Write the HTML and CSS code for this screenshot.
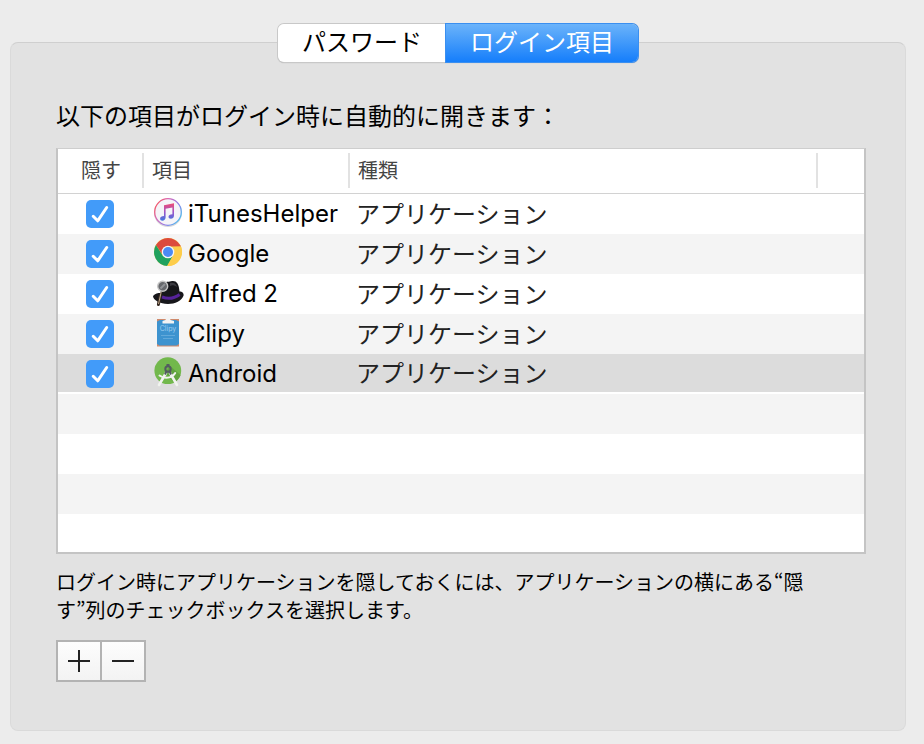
FILE: index.html
```html
<!DOCTYPE html>
<html lang="ja">
<head>
    <meta charset="UTF-8">
    <meta name="viewport" content="width=device-width, initial-scale=1.0">
    <title>ログイン項目</title>
    <link rel="stylesheet" href="styles.css">
</head>
<body>
    <div class="tabs" role="tablist">
        <button class="tab" type="button" role="tab" aria-selected="false">パスワード</button>
        <button class="tab active" type="button" role="tab" aria-selected="true">ログイン項目</button>
    </div>

    <main class="panel">
        <h1 class="title" id="title">以下の項目がログイン時に自動的に開きます：</h1>

        <div class="list">
            <table class="items" aria-labelledby="title">
                <colgroup>
                    <col class="col-hide">
                    <col class="col-name">
                    <col>
                    <col class="col-end">
                </colgroup>
                <thead>
                    <tr>
                        <th class="center"><span>隠す</span></th>
                        <th><span>項目</span></th>
                        <th><span>種類</span></th>
                        <th></th>
                    </tr>
                </thead>
                <tbody>
                    <tr>
                        <td class="center"><input type="checkbox" id="itunes" checked></td>
                        <td>
                            <label class="name" for="itunes">
                                <svg class="icon" viewBox="0 0 32 32">
                                    <defs>
                                        <linearGradient id="ring" x1="0" y1="0.2" x2="1" y2="0.8">
                                            <stop offset="0" stop-color="#f8565c"/>
                                            <stop offset="0.3" stop-color="#d668b8"/>
                                            <stop offset="0.65" stop-color="#8f7be8"/>
                                            <stop offset="1" stop-color="#42c6f0"/>
                                        </linearGradient>
                                        <linearGradient id="note" x1="0" y1="0" x2="0" y2="1">
                                            <stop offset="0" stop-color="#ef4d73"/>
                                            <stop offset="0.5" stop-color="#a052c8"/>
                                            <stop offset="1" stop-color="#3f78e0"/>
                                        </linearGradient>
                                    </defs>
                                    <circle cx="16" cy="15" r="14" fill="#000" opacity="0.15"/>
                                    <circle cx="16" cy="14" r="13.3" fill="#f5f4f8" stroke="url(#ring)" stroke-width="1.3"/>
                                    <path fill="url(#note)" d="M12 7.2 22 5.2V17.6C22 19.8 20.4 20.8 18.9 20.8 17.3 20.8 16.5 19.9 16.5 18.8 16.5 17.2 18 16.5 20.4 16.2V9.4L13.6 10.8V19.6C13.6 21.7 12 22.7 10.5 22.7 9 22.7 8.1 21.8 8.1 20.7 8.1 19.1 9.6 18.4 12 18.1Z"/>
                                </svg>
                                iTunesHelper
                            </label>
                        </td>
                        <td class="kind">アプリケーション</td>
                        <td></td>
                    </tr>
                    <tr>
                        <td class="center"><input type="checkbox" id="google" checked></td>
                        <td>
                            <label class="name" for="google">
                                <svg class="icon" viewBox="0 0 32 32">
                                    <circle cx="16" cy="14" r="14" fill="#fdcd4b"/>
                                    <path fill="#dc4a3d" d="M3.9 7A14 14 0 0 1 28.1 7L29 8.5H16L10.8 17Z"/>
                                    <path fill="#1fa15e" d="M3.9 7A14 14 0 0 0 15.5 28L21.2 17.2 16 20 10.5 17.3Z"/>
                                    <path fill="#fdcd4b" d="M28.9 8.5A14 14 0 0 1 15 28L21.2 17.2 20 9Z"/>
                                    <circle cx="16" cy="14" r="6.3" fill="#f4f4f4"/>
                                    <circle cx="16" cy="14" r="5" fill="#4a8af4"/>
                                </svg>
                                Google
                            </label>
                        </td>
                        <td class="kind">アプリケーション</td>
                        <td></td>
                    </tr>
                    <tr>
                        <td class="center"><input type="checkbox" id="alfred" checked></td>
                        <td>
                            <label class="name" for="alfred">
                                <svg class="icon" viewBox="0 0 32 32">
                                    <path fill="#17171b" d="M1 18C3 15.5 6 15 8.5 15L9.5 6C12 3 16 4.2 19 3.2 24 2 27 5 27.5 13.5 30 13.5 32 15 31.6 17.5 30 22.5 23 26 16 26 8 26 1 22 1 18Z"/>
                                    <path fill="#3c3c42" d="M18 5C21 4 24 5 25.2 9 22 7 20 7 18 8Z"/>
                                    <path fill="none" stroke="#56239a" stroke-width="3" d="M10 19C16 21.2 22 20.8 27.6 16.5"/>
                                    <path stroke="#33271f" stroke-width="3" stroke-linecap="round" d="M8.3 17 6.4 26.5"/>
                                    <path stroke="#c1a88b" stroke-width="1" d="M9.3 13.5 6.5 26"/>
                                    <circle cx="10.7" cy="8.3" r="5" fill="#66686c" stroke="#c6c6c6" stroke-width="1.4"/>
                                    <path stroke="#909296" stroke-width="2" d="M8.5 10.5 13 6"/>
                                </svg>
                                Alfred 2
                            </label>
                        </td>
                        <td class="kind">アプリケーション</td>
                        <td></td>
                    </tr>
                    <tr>
                        <td class="center"><input type="checkbox" id="clipy" checked></td>
                        <td>
                            <label class="name" for="clipy">
                                <svg class="icon" viewBox="0 0 32 32">
                                    <path fill="#cf8a6c" d="M5 1H27V28.5H5Z"/>
                                    <path fill="#3d93cf" d="M5 3.5 8 2H24L27 3.5V26L24.5 27.5H7.5L5 26Z"/>
                                    <path fill="#f3f3f3" d="M10.5 5.5V3L13.5 2C14-1 18-1 18.5 2L22 3V5.5Z"/>
                                    <text class="clipy-text" x="16" y="13" text-anchor="middle">Clipy</text>
                                    <path stroke="#62a9da" stroke-width="1" d="M9 17.5H23M11 20.5H21"/>
                                </svg>
                                Clipy
                            </label>
                        </td>
                        <td class="kind">アプリケーション</td>
                        <td></td>
                    </tr>
                    <tr class="selected">
                        <td class="center"><input type="checkbox" id="android" checked></td>
                        <td>
                            <label class="name" for="android">
                                <svg class="icon" viewBox="0 0 32 32">
                                    <circle cx="15.8" cy="12.7" r="13.4" fill="#72b84c"/>
                                    <path fill="#61a33f" d="M18 8 28.6 17A13.4 13.4 0 0 1 22 24.5L13 15Z"/>
                                    <path fill="none" stroke="#f1f3ef" stroke-width="2" stroke-linecap="round" d="M7.5 17.5C12 21 20 20.5 23.2 15"/>
                                    <path fill="none" stroke="#f1f3ef" stroke-width="2.6" stroke-linecap="round" d="M14 15 7 27M18 15 25 27"/>
                                    <path fill="#535c60" d="M14.5 6H17.5V8.5H14.5Z"/>
                                    <circle cx="16" cy="11" r="2.7" fill="none" stroke="#535c60" stroke-width="2"/>
                                    <path stroke="#535c60" stroke-width="2" d="M14.3 13.5 13 16.5M17.7 13.5 19 16.5"/>
                                </svg>
                                Android
                            </label>
                        </td>
                        <td class="kind">アプリケーション</td>
                        <td></td>
                    </tr>
                </tbody>
            </table>
        </div>

        <p class="note">ログイン時にアプリケーションを隠しておくには、アプリケーションの横にある“隠<br>す”列のチェックボックスを選択します。</p>

        <div class="actions">
            <button class="action" type="button" aria-label="追加">
                <svg width="22" height="22" viewBox="0 0 22 22"><path d="M0 11H22M11 0V22"/></svg>
            </button>
            <button class="action" type="button" aria-label="削除">
                <svg width="22" height="22" viewBox="0 0 22 22"><path d="M0 11H22"/></svg>
            </button>
        </div>
    </main>
</body>
</html>
```
FILE: styles.css
```css
* {
    margin: 0;
    padding: 0;
    box-sizing: border-box;
}
body {
    background-color: #ececec;
    color: #000;
    font-family: Inter, "Noto Sans CJK JP", sans-serif;
    font-size: 24px;
    min-height: 100vh;
    padding: 23px 18px 14px 10px;
    display: flex;
    flex-direction: column;
}
button {
    font-family: inherit;
    border: none;
}

/* Tabs */
.tabs {
    display: flex;
    align-self: center;
    z-index: 1;
    border-radius: 6px;
    box-shadow: 0 0 0 1px #c8c8c8, 0 1px 1px 0 #a8a8a8;
    margin: 1px 0;
}
.tab {
    height: 38px;
    padding: 0 24px;
    font-size: 24px;
    line-height: 38px;
    background: #fff;
    color: #000;
    border-radius: 6px 0 0 6px;
}
.tab.active {
    background: linear-gradient(#6bb3fa, #157efb);
    color: #fff;
    border-radius: 0 6px 6px 0;
    box-shadow: 0 0 0 1px #3a8ff0;
}

/* Panel */
.panel {
    flex: 1;
    margin-top: -21px;
    padding: 54px 39px 48px 45px;
    background: #e2e2e2;
    border: 1px solid #dadada;
    border-top-color: #cfcfcf;
    border-radius: 8px;
}
.title {
    font-family: "Noto Sans CJK JP", sans-serif;
    font-size: 24px;
    font-weight: normal;
    line-height: 36px;
    margin-bottom: 15px;
}

/* Item list */
.list {
    min-height: 406px;
    border: 2px solid #c4c4c4;
    border-top: 1px solid #cecece;
    background: repeating-linear-gradient(#fff 0 40px, #f4f4f4 40px 80px) 0 45px #fff;
    background-repeat: no-repeat;
}
.items {
    width: 100%;
    table-layout: fixed;
    border-collapse: separate;
    border-spacing: 0;
}
.col-hide {
    width: 86px;
}
.col-name {
    width: 206px;
}
.col-end {
    width: 46px;
}
th {
    height: 45px;
    padding: 0 0 1px;
    border-bottom: 1px solid #d2d2d2;
    color: #444;
    font-size: 20px;
    font-weight: normal;
    text-align: left;
    background: #fff;
}
th span {
    display: block;
    height: 35px;
    line-height: 37px;
    padding-left: 8px;
    border-right: 2px solid #e2e2e2;
}
th.center span {
    padding-left: 2px;
}
td {
    height: 40px;
}
.center {
    text-align: center;
}
td.center {
    padding-right: 2px;
}
.selected td {
    background: #dcdcdc;
    border-bottom: 2px solid #fff;
}
.selected .center,
.selected .name,
.selected .kind {
    padding-top: 2px;
}
.kind {
    padding-top: 2px;
    padding-left: 6px;
    line-height: 36px;
    color: #222;
}
.name {
    display: flex;
    align-items: center;
    gap: 4px;
    height: 38px;
    padding-bottom: 2px;
    padding-left: 8px;
    white-space: nowrap;
}
.icon {
    flex: none;
    width: 32px;
    height: 32px;
    margin-top: 2px;
    overflow: visible;
}
.clipy-text {
    fill: #9bcdf0;
    font-size: 7px;
}
input[type="checkbox"] {
    appearance: none;
    display: block;
    width: 28px;
    height: 28px;
    margin: 0 auto;
    background: #fff;
    border-radius: 5px;
}
input[type="checkbox"]:checked {
    background: #429bf9 url("data:image/svg+xml,%3Csvg xmlns='http://www.w3.org/2000/svg' viewBox='0 0 28 28'%3E%3Cpath d='M7.2 16.3 11.7 20.8 20.7 7.5' fill='none' stroke='white' stroke-width='3' stroke-linecap='round' stroke-linejoin='round'/%3E%3C/svg%3E");
}

/* Note and buttons */
.note {
    font-family: "Noto Sans CJK JP", sans-serif;
    font-size: 20px;
    line-height: 28px;
    margin: 14px 0 16px;
}
.actions {
    display: inline-flex;
    vertical-align: top;
    gap: 2px;
    padding: 2px;
    background: #b3b3b3;
}
.action {
    display: flex;
    align-items: center;
    justify-content: center;
    width: 42px;
    height: 38px;
    background: linear-gradient(#fdfdfd, #f3f3f3);
}
.action svg {
    stroke: #222;
    stroke-width: 2;
}
```
